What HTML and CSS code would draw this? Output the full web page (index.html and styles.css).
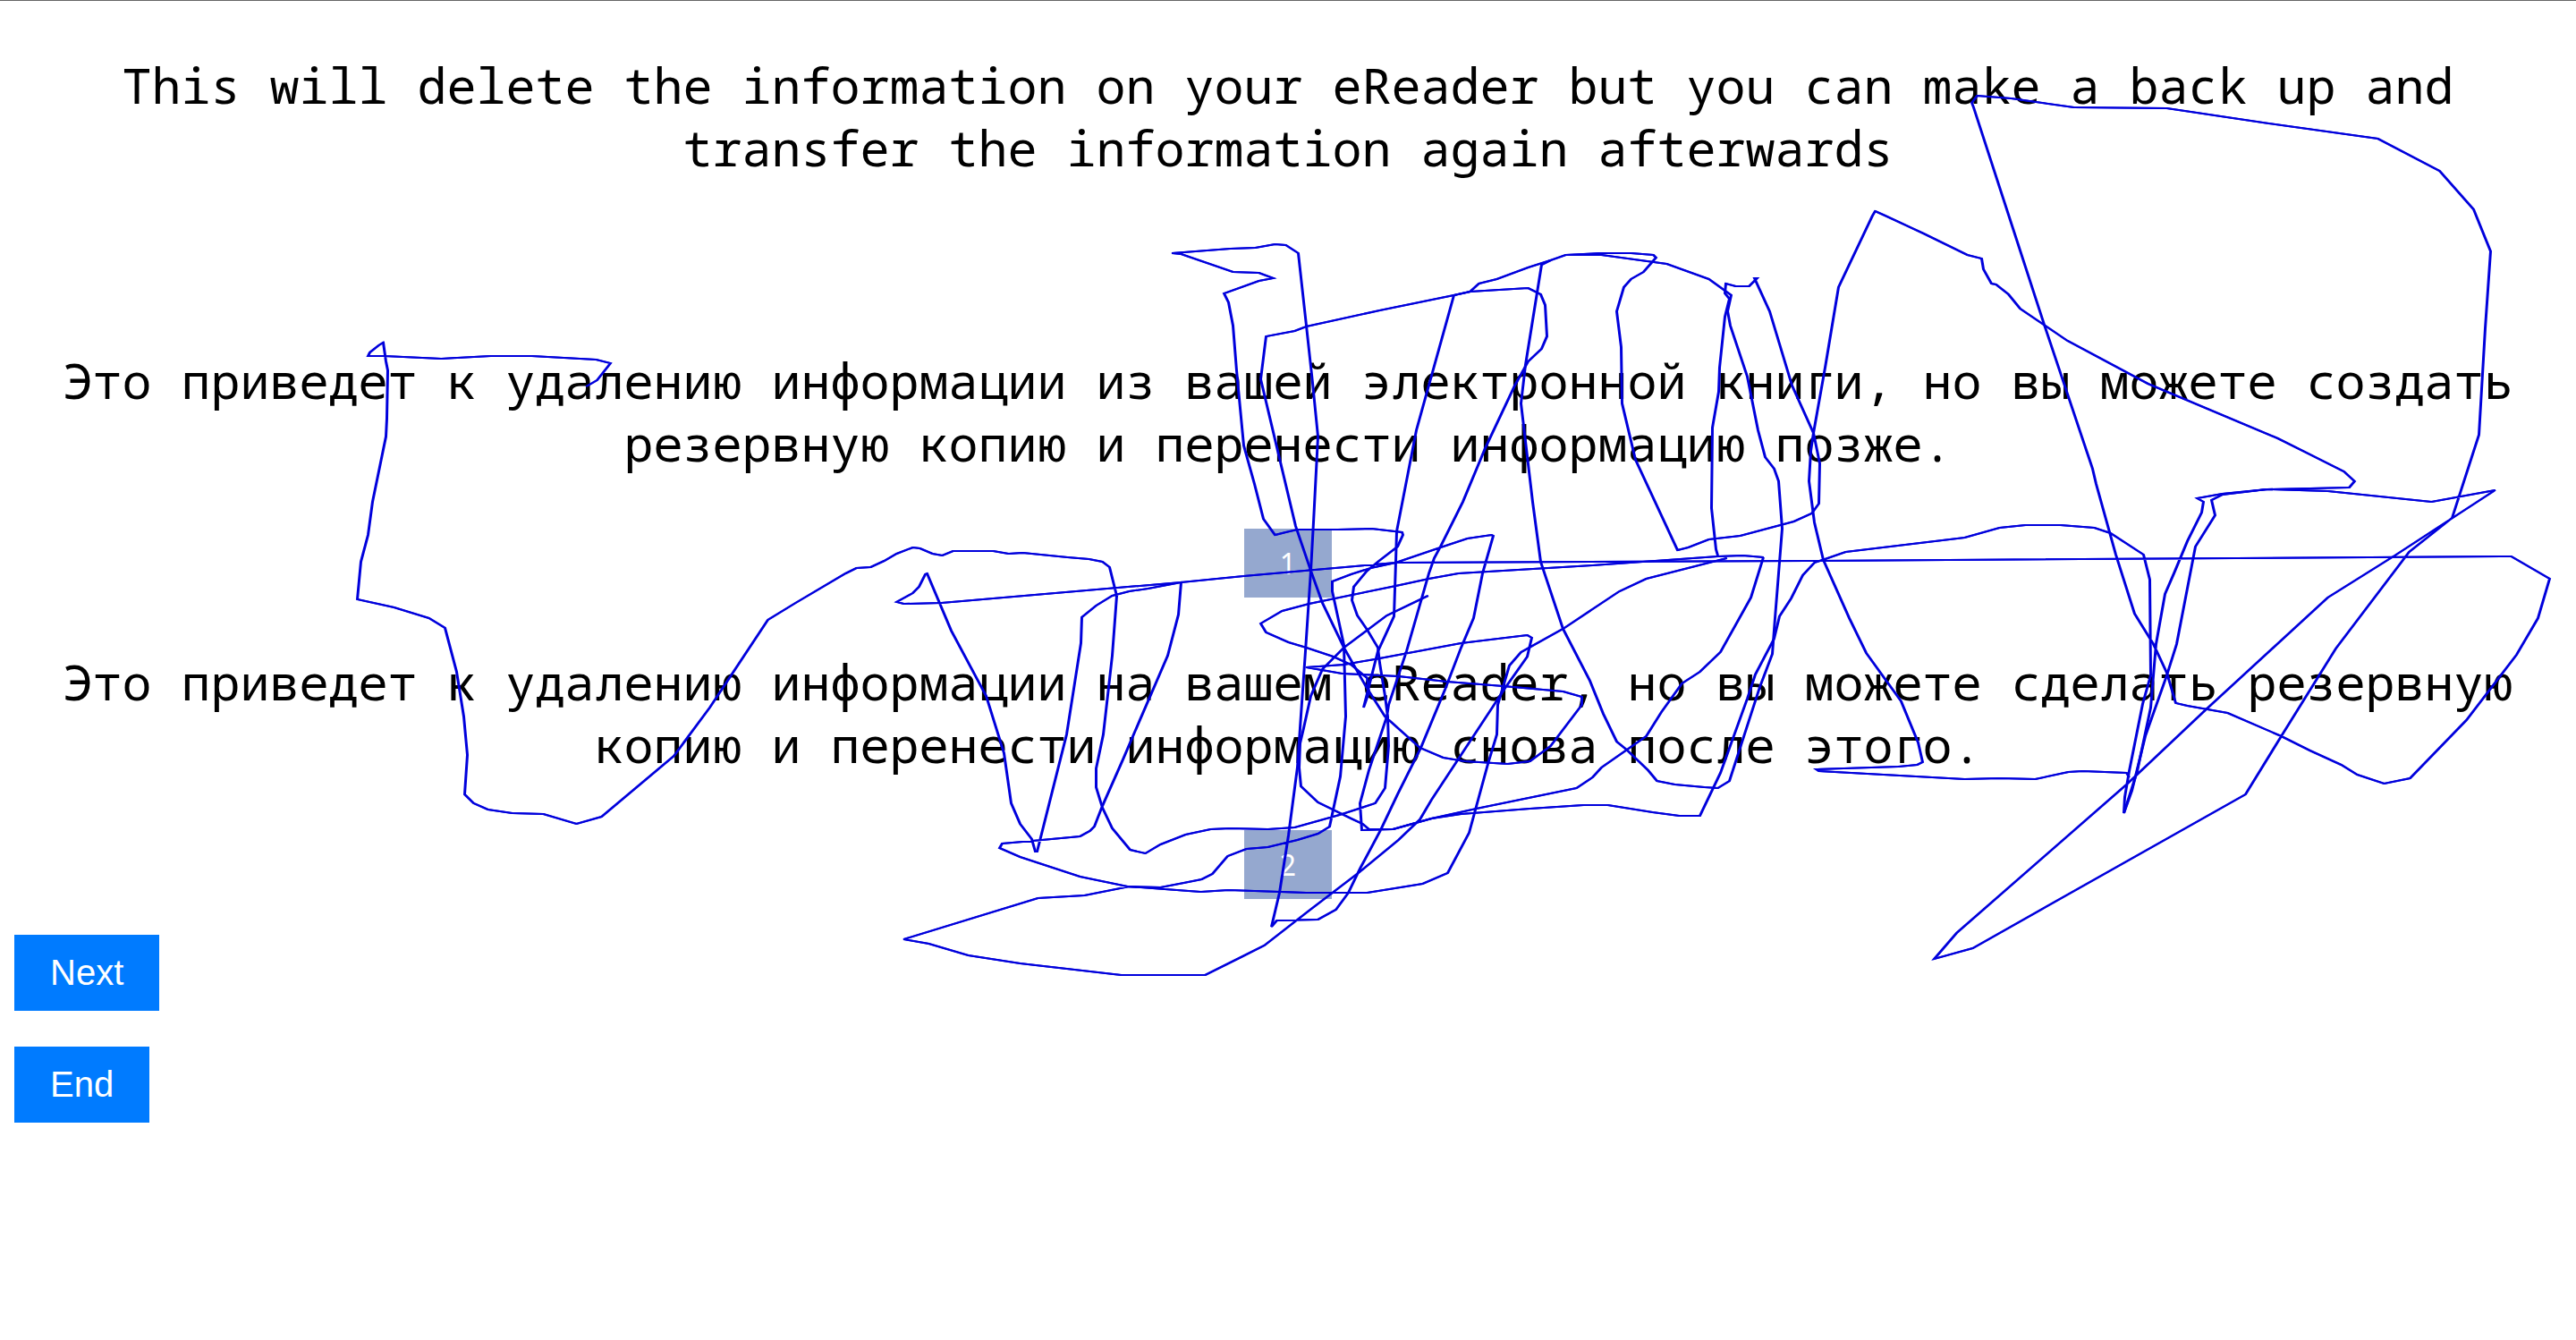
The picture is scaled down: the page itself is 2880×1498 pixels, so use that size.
FILE: index.html
```html
<!DOCTYPE html>
<html lang="ru">
<head>
<meta charset="utf-8">
<title>eReader</title>
<link rel="stylesheet" href="styles.css">
</head>
<body>
<main class="page">
  <p class="sentence source" lang="en">This will delete the information on your eReader but you can make a back up and transfer the information again afterwards</p>
  <section class="choice">
    <p class="sentence">Это приведет к удалению информации из вашей электронной книги, но вы можете создать резервную копию и перенести информацию позже.</p>
    <button class="button pick" type="button">1</button>
  </section>
  <section class="choice">
    <p class="sentence">Это приведет к удалению информации на вашем eReader, но вы можете сделать резервную копию и перенести информацию снова после этого.</p>
    <button class="button pick" type="button">2</button>
  </section>
  <div class="actions">
    <button class="button" type="button">Next</button>
    <button class="button" type="button">End</button>
  </div>
</main>
<svg class="trace" width="2880" height="1498" viewBox="0 0 2880 1498" aria-hidden="true">
  <polyline points="655,431 667,424 682,405 666,401 594,397 548,397 493,400 429,397 411,397 413,393 423,385 428,382 431,403 433,413 432,467 431,487 416,560 411,597 403,627 399,669 440,678 479,690 497,701 510,750 518,800 522,843 519,887 529,897 545,904 572,908 607,909 644,920 672,912 753,844 793,790 858,692 889,673 945,640 957,634 973,633 988,626 1002,618 1020,611 1028,612 1042,618 1053,620 1065,615 1110,615 1127,618 1143,617 1193,622 1217,624 1232,627 1240,633 1248,665 1243,732 1233,820 1225,858 1225,879 1232,902 1243,925 1263,949 1280,953 1297,943 1325,932 1353,926 1375,925 1417,926 1447,924 1497,910 1537,897 1548,880 1552,833 1551,800 1548,777 1542,740 1540,723 1528,703 1517,687 1511,670 1513,655 1527,638 1540,627 1562,610 1568,597 1567,594 1533,590 1495,591 1450,591 1437,594 1425,597 1412,579 1402,540 1390,497 1382,413 1378,363 1373,337 1368,327 1407,313 1423,310 1407,304 1378,303 1320,283 1310,282 1375,277 1403,276 1425,272 1437,273 1451,282 1460,363 1467,427 1473,487 1468,583 1465,637 1459,727 1453,813 1450,857 1440,933 1430,997 1421,1035 1427,1028 1473,1027 1493,1016 1507,997 1520,970 1543,927 1562,887 1588,835 1615,770 1633,723 1647,690 1657,640 1669,598 1667,597 1640,601 1610,611 1560,628 1532,634 1510,641 1489,649 1489,660 1502,720 1504,800 1498,867 1486,923 1473,931 1450,938 1417,946 1393,948 1372,956 1355,976 1343,982 1323,986 1297,991 1260,990 1207,979 1140,957 1117,947 1120,942 1143,940 1207,934 1218,928 1223,923 1232,900 1255,848 1273,806 1305,732 1317,686 1320,650 1283,657 1262,660 1243,665 1225,676 1209,689 1208,718 1192,820 1159,951 1157,951 1153,937 1140,920 1130,897 1122,841 1102,777 1063,704 1036,640 1034,641 1027,655 1020,662 1002,672 1010,674 1052,673 1320,650 1390,643 1560,628 2020,626 2807,621 2850,646 2837,690 2813,731 2757,804 2694,869 2665,875 2635,865 2617,854 2582,838 2550,822 2490,796 2445,788 2432,785 2422,751 2407,719 2386,685 2365,619 2343,540 2339,523 2285,362 2206,119 2204,114 2210,106 2248,109 2318,119 2422,120 2536,137 2658,154 2727,190 2765,233 2784,280 2778,366 2771,485 2741,578 2693,616 2611,724 2550,822 2510,887 2205,1059 2162,1071 2187,1042 2377,876 2466,792 2602,667 2677,620 2789,547 2718,560 2602,548 2534,546 2484,551 2456,556 2463,560 2461,572 2445,604 2430,640 2420,663 2410,719 2404,790 2389,861 2374,908 2375,890 2380,861 2395,786 2404,754 2403,647 2396,619 2359,595 2341,589 2303,586 2264,586 2235,589 2196,600 2063,616 2037,625 2028,628 2015,642 2002,668 1989,688 1983,713 1962,753 1953,780 1923,863 1900,911 1877,911 1847,907 1797,899 1770,899 1710,903 1633,909 1600,914 1557,926 1522,927 1520,897 1530,860 1550,800 1552,787 1572,727 1597,640 1603,623 1610,610 1635,560 1660,500 1693,430 1708,403 1723,389 1729,375 1727,340 1722,328 1708,321 1643,325 1625,329 1542,346 1460,364 1447,369 1415,375 1409,423 1428,503 1448,587 1465,637 1478,673 1502,723 1527,767 1548,800 1587,835 1613,846 1637,850 1685,853 1710,850 1733,833 1768,787 1768,778 1747,772 1680,766 1617,761 1563,755 1500,752 1460,745 1502,742 1542,735 1633,718 1707,709 1712,712 1707,733 1683,767 1600,893 1587,915 1563,938 1518,975 1463,1017 1413,1056 1387,1069 1347,1089 1253,1089 1140,1076 1082,1067 1038,1054 1010,1049 1160,1003 1212,1000 1262,990 1297,991"/>
  <polyline points="1260,990 1342,996 1373,994 1460,997 1528,997 1590,987 1618,975 1642,930 1663,853 1673,820 1674,787 1687,743 1700,728 1747,702 1810,660 1840,646 1930,623"/>
  <polyline points="1971,622 1957,667 1923,728 1900,750 1880,763 1857,795 1840,822 1790,857 1780,868 1762,880 1650,903 1600,914 1557,926 1530,926 1523,920 1510,914 1473,896 1454,878 1452,857 1453,830 1457,813 1465,777 1478,747 1502,723 1550,687 1596,665"/>
  <polyline points="1971,622 1948,620 1920,621 1780,631 1630,640 1597,646 1560,654 1463,674 1433,682 1409,696 1415,706 1440,717 1460,723 1490,733 1510,742 1528,757 1530,773 1524,790 1540,727 1547,712 1558,688 1560,627 1561,593 1583,480 1625,329 1643,325 1653,316 1673,311 1708,298 1733,290 1750,284 1788,282 1823,282 1848,284 1851,287 1837,303 1823,311 1815,320 1807,347 1812,387 1813,450 1828,513 1875,614 1887,611 1910,602 1945,598 2005,582 2025,573 2033,562 2034,517 2027,483 2003,430 1978,347 1961,310 1964,310 1955,319 1940,319 1929,316 1928,327 1933,333 1928,353 1922,410 1921,437 1914,477 1913,567 1918,613 1920,620"/>
  <polyline points="1750,284 1790,284 1863,294 1910,311 1935,329 1931,347 1934,363 1953,420 1965,480 1973,510 1983,523 1988,537 1992,590 1984,690 1981,730 1967,767 1933,872 1920,880 1905,879 1872,876 1852,872 1842,860 1818,837 1807,828 1792,797 1777,760 1747,702 1722,627 1713,560 1700,450 1705,407 1723,295 1733,290"/>
  <polyline points="2374,908 2383,883 2398,822 2422,754 2433,719 2454,610 2476,575 2472,558 2484,552 2534,546 2626,544 2632,537 2620,526 2546,489 2401,428 2311,380 2258,344 2245,328 2231,317 2226,316 2217,300 2215,288 2199,284 2150,260 2107,240 2096,235 2093,240 2055,320 2040,410 2027,483 2024,503 2022,537 2028,583 2038,625 2067,690 2086,729 2125,783 2144,829 2149,851 2143,854 2122,856 2030,859 2033,861 2196,870 2235,869 2275,870 2312,862 2328,861 2377,863 2380,868"/>
</svg>
</body>
</html>
```
FILE: styles.css
```css
* {
  box-sizing: border-box;
}

body {
  position: relative;
  margin: 0;
  border-top: 1px solid #666;
  background: #fff;
  color: #000;
  font-family: "Liberation Sans", Arial, sans-serif;
  overflow-x: hidden;
}

.page {
  display: flex;
  flex-direction: column;
  gap: 59px;
  padding: 59px 16px 40px;
}

.sentence {
  margin: 0;
  font-family: "Noto Sans Mono", "Liberation Mono", monospace;
  font-size: 55px;
  line-height: 70px;
  text-align: center;
}

.source {
  margin-bottom: 131px;
}

.choice {
  display: flex;
  flex-direction: column;
  align-items: center;
  gap: 61px;
}

.actions {
  display: flex;
  flex-direction: column;
  align-items: flex-start;
  gap: 40px;
  margin-top: -19px;
}

.button {
  padding: 20px 40px;
  border: 0;
  background: #007bff;
  color: #fff;
  font-family: inherit;
  font-size: 40px;
  line-height: 45px;
  cursor: pointer;
}

.pick {
  background: #95a8cf;
  font-family: "Noto Sans", sans-serif;
  font-size: 32px;
  line-height: 37px;
}

.trace {
  position: absolute;
  top: 0;
  left: 0;
  pointer-events: none;
  /* broad-nib pen: upright strokes come out a pixel wider than flat ones */
  filter: drop-shadow(1px 0 0 #0000dc);
}

.trace polyline {
  fill: none;
  stroke: #0000dc;
  stroke-width: 2;
}
```
